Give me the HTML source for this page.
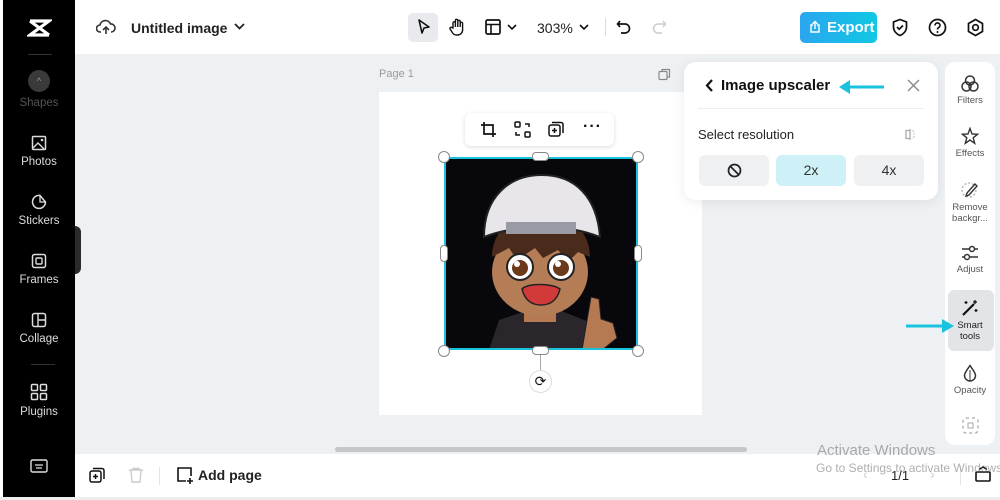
<!DOCTYPE html>
<html><head><style>
*{margin:0;padding:0;box-sizing:border-box}
body{width:1000px;height:500px;background:#fff;font-family:"Liberation Sans",sans-serif;position:relative;overflow:hidden;color:#111}
.abs{position:absolute}
.side{left:3px;top:0;width:72px;height:497px;background:#000;color:#ddd;font-size:11.5px;text-align:center}
.si{position:absolute;left:0;width:72px}
.si svg{display:block;margin:0 auto 5px}
.rp{left:945px;top:62px;width:50px;height:383px;background:#fff;border-radius:10px;font-size:9.5px;color:#555;text-align:center}
.ri{position:absolute;left:0;width:50px}
.ri svg{display:block;margin:0 auto 3px}
.btn{position:absolute;top:155px;width:70px;height:31px;background:#eef0f2;border-radius:6px;font-size:14px;text-align:center;line-height:31px;color:#333}
</style></head><body>
<div class="abs" style="left:75px;top:54px;width:925px;height:400px;background:#eef1f4"></div>
<div class="abs" style="left:0;top:497px;width:1000px;height:3px;background:#eee"></div>
<div class="abs side">
 <svg class="abs" style="left:24px;top:18px" width="25" height="20" viewBox="0 0 25 20"><path d="M3 3h19L3 17h19M3 3l19 14" stroke="#fff" stroke-width="3.2" fill="none"/></svg>
 <div class="abs" style="left:25px;top:54px;width:24px;height:1px;background:#333"></div>
 <div class="abs" style="left:25px;top:70px;width:22px;height:22px;border-radius:50%;background:#3a3a3a;color:#999;font-size:9px;line-height:22px">^</div>
 <div class="si" style="top:97px;color:#555">Shapes</div>
 <div class="si" style="top:135px"><svg width="16" height="16"><rect x="1.5" y="1.5" width="13" height="13" rx="1" stroke="#ddd" fill="none" stroke-width="1.5"/><path d="M2 13l5-5 6 6" stroke="#ddd" fill="none" stroke-width="1.4"/><circle cx="11" cy="5" r="1.3" fill="#ddd"/></svg>Photos</div>
 <div class="si" style="top:194px"><svg width="16" height="16"><path d="M9 1.5A6.5 6.5 0 1 0 14.5 8L9 1.5z" stroke="#ddd" fill="none" stroke-width="1.5"/><path d="M9 1.5v6.5h5.5" stroke="#ddd" fill="none" stroke-width="1.3"/></svg>Stickers</div>
 <div class="si" style="top:253px"><svg width="16" height="16"><rect x="1.5" y="1.5" width="13" height="13" rx="2" stroke="#ddd" fill="none" stroke-width="1.5"/><rect x="5" y="5" width="6" height="6" rx="1" stroke="#ddd" fill="none" stroke-width="1.4"/></svg>Frames</div>
 <div class="si" style="top:312px"><svg width="16" height="16"><rect x="1.5" y="1.5" width="13" height="13" rx="2" stroke="#ddd" fill="none" stroke-width="1.5"/><path d="M7 2v12M7 8h7" stroke="#ddd" stroke-width="1.4"/></svg>Collage</div>
 <div class="abs" style="left:28px;top:364px;width:24px;height:1px;background:#333"></div>
 <div class="si" style="top:383px"><svg width="18" height="18"><g stroke="#ddd" fill="none" stroke-width="1.5"><rect x="1.5" y="1.5" width="6" height="6" rx="1"/><rect x="10.5" y="1.5" width="6" height="6" rx="1"/><rect x="1.5" y="10.5" width="6" height="6" rx="1"/><rect x="10.5" y="10.5" width="6" height="6" rx="1"/></g></svg>Plugins</div>
 <svg class="abs" style="left:27px;top:459px" width="18" height="15"><rect x="1" y="1" width="16" height="12" rx="1.5" stroke="#ddd" fill="none" stroke-width="1.4"/><path d="M5 6h8M6 9h6" stroke="#ddd" stroke-width="1.3"/></svg>
</div>
<div class="abs" style="left:75px;top:226px;width:6px;height:48px;background:#2a2a2a;border-radius:0 6px 6px 0"></div>
<svg class="abs" style="left:96px;top:18px" width="20" height="18"><path d="M5 14H4a3.5 3.5 0 0 1 0-7 5.5 5.5 0 0 1 10.5-1 4 4 0 0 1 1 8H15M10 16V9M7 12l3-3 3 3" stroke="#333" stroke-width="1.6" fill="none"/></svg>
<div class="abs" style="left:131px;top:20px;font-size:14px;font-weight:bold;color:#222">Untitled image</div>
<svg class="abs" style="left:234px;top:23px" width="11" height="8"><path d="M1 1l4.5 4.5L10 1" stroke="#222" stroke-width="1.8" fill="none"/></svg>
<div class="abs" style="left:408px;top:13px;width:30px;height:29px;background:#e8eaed;border-radius:5px"></div>
<svg class="abs" style="left:416px;top:18px" width="16" height="18"><path d="M3 2l10 7-5 1-2 5z" stroke="#111" stroke-width="1.6" fill="none" stroke-linejoin="round"/></svg>
<svg class="abs" style="left:448px;top:17px" width="18" height="20"><path d="M5 11V6a1.2 1.2 0 0 1 2.4 0v4V3.5a1.2 1.2 0 0 1 2.4 0V10V4.5a1.2 1.2 0 0 1 2.4 0V10V6.5a1.2 1.2 0 0 1 2.4 0V13a5 5 0 0 1-5 5h-1a5 5 0 0 1-4-2l-2.5-4a1.2 1.2 0 0 1 2-1.3z" stroke="#111" stroke-width="1.4" fill="none"/></svg>
<svg class="abs" style="left:485px;top:19px" width="16" height="16"><rect x="1" y="1" width="14" height="14" rx="1.5" stroke="#111" stroke-width="1.7" fill="none"/><path d="M1 5.5h14M6 5.5V15" stroke="#111" stroke-width="1.6"/></svg>
<svg class="abs" style="left:507px;top:24px" width="10" height="7"><path d="M1 1l4 4 4-4" stroke="#111" stroke-width="1.6" fill="none"/></svg>
<div class="abs" style="left:537px;top:20px;font-size:14px;color:#222">303%</div>
<svg class="abs" style="left:579px;top:24px" width="10" height="7"><path d="M1 1l4 4 4-4" stroke="#111" stroke-width="1.6" fill="none"/></svg>
<div class="abs" style="left:605px;top:18px;width:1px;height:18px;background:#ddd"></div>
<svg class="abs" style="left:616px;top:19px" width="16" height="16"><path d="M4 2L1.5 5 4 8M2 5h7a4.5 4.5 0 0 1 0 9H5" stroke="#111" stroke-width="1.7" fill="none"/></svg>
<svg class="abs" style="left:651px;top:19px" width="16" height="16"><path d="M12 2l2.5 3L12 8M14 5H7a4.5 4.5 0 0 0 0 9h4" stroke="#ccc" stroke-width="1.5" fill="none"/></svg>
<div class="abs" style="left:800px;top:12px;width:77px;height:31px;border-radius:5px;background:linear-gradient(90deg,#2aa6ef,#10c8e4);color:#fff;font-weight:bold;font-size:15px;line-height:31px;padding-left:27px">Export</div>
<svg class="abs" style="left:808px;top:20px" width="14" height="14"><path d="M5 5H3v7h8V5H9M7 9V1.5M4.5 4L7 1.5 9.5 4" stroke="#fff" stroke-width="1.4" fill="none"/></svg>
<svg class="abs" style="left:891px;top:18px" width="18" height="19"><path d="M9 1.5l6.5 2.5v5c0 4-3 7-6.5 8.5C5.5 16 2.5 13 2.5 9V4z" stroke="#111" stroke-width="1.7" fill="none"/><path d="M6 9l2.2 2.2L12 7.5" stroke="#111" stroke-width="1.7" fill="none"/></svg>
<svg class="abs" style="left:928px;top:18px" width="19" height="19"><circle cx="9.5" cy="9.5" r="8" stroke="#111" stroke-width="1.7" fill="none"/><path d="M7 7.5a2.5 2.5 0 1 1 3.5 2.2c-.8.4-1 1-1 1.8" stroke="#111" stroke-width="1.6" fill="none"/><circle cx="9.5" cy="14" r="1" fill="#111"/></svg>
<svg class="abs" style="left:966px;top:18px" width="19" height="19"><path d="M9.5 1.5l7 4v8l-7 4-7-4v-8z" stroke="#111" stroke-width="1.7" fill="none"/><circle cx="9.5" cy="9.5" r="2.8" stroke="#111" stroke-width="1.7" fill="none"/></svg>
<div class="abs" style="left:379px;top:68px;font-size:11px;color:#999">Page 1</div>
<svg class="abs" style="left:658px;top:68px" width="13" height="13"><rect x="1" y="3.5" width="8" height="8" rx="1" stroke="#888" fill="none" stroke-width="1.2"/><path d="M4 3.5V1.5h7.5V9H9.5" stroke="#888" fill="none" stroke-width="1.2"/></svg>
<div class="abs" style="left:379px;top:92px;width:323px;height:323px;background:#fff"></div>
<div class="abs" style="left:465px;top:113px;width:149px;height:33px;background:#fff;border-radius:6px;box-shadow:0 1px 4px rgba(0,0,0,.15)"></div>
<svg class="abs" style="left:480px;top:121px" width="17" height="17"><path d="M4 1v12h12M1 4h12v12" stroke="#111" stroke-width="1.7" fill="none"/></svg>
<svg class="abs" style="left:514px;top:121px" width="17" height="17"><g stroke="#111" stroke-width="1.5" fill="none"><rect x="1" y="1" width="5" height="5" rx="1"/><rect x="11" y="11" width="5" height="5" rx="1"/><path d="M11 3h4v3M6 14H2v-3"/></g></svg>
<svg class="abs" style="left:548px;top:121px" width="17" height="17"><g stroke="#111" stroke-width="1.5" fill="none"><rect x="1" y="4" width="11" height="11" rx="2"/><path d="M4 1.5h9a2 2 0 0 1 2 2V12M6.5 7v5M4 9.5h5"/></g></svg>
<div class="abs" style="left:583px;top:118px;font-size:16px;font-weight:bold;letter-spacing:1px">···</div>
<svg class="abs" style="left:444px;top:157px" width="194" height="193" viewBox="0 0 194 193">
<rect width="194" height="193" fill="#07070c"/>
<path d="M45 193l10-30 30-10h30l30 12 10 28z" fill="#2a262c"/>
<rect x="80" y="140" width="32" height="25" fill="#b57a52"/>
<ellipse cx="96" cy="115" rx="48" ry="44" fill="#b47d56"/>
<path d="M48 100c0-25 20-45 48-45s50 18 50 45l-12-5-10 10-10-12-15 8-8-10-18 12-8-12z" fill="#4a2a1a"/>
<path d="M40 80c0-40 25-62 58-62s55 22 58 62c-20-8-40-10-58-10s-40 3-58 10z" fill="#e8e6ea" stroke="#222" stroke-width="2"/>
<rect x="62" y="65" width="70" height="12" fill="#9a9aa4"/>
<circle cx="76" cy="110" r="13" fill="#fff" stroke="#222" stroke-width="2"/><circle cx="76" cy="111" r="8" fill="#6a3a1a"/><circle cx="73" cy="107" r="3" fill="#fff"/>
<circle cx="117" cy="110" r="13" fill="#fff" stroke="#222" stroke-width="2"/><circle cx="117" cy="111" r="8" fill="#6a3a1a"/><circle cx="114" cy="107" r="3" fill="#fff"/>
<path d="M78 132c5-6 30-6 38 0-3 12-10 16-19 16s-16-4-19-16z" fill="#d23a3a" stroke="#222" stroke-width="1.5"/>
<path d="M147 140l8 2 2 20 12 4 4 15-15 12h-20z" fill="#b57a52" stroke="#222" stroke-width="1"/>
</svg>
<div class="abs" style="left:444px;top:157px;width:194px;height:193px;border:2px solid #19c3dd"></div>
<div class="abs" style="left:540px;top:350px;width:1px;height:20px;background:#aaa"></div>
<div class="abs" style="left:438px;top:151px;width:12px;height:12px;border-radius:50%;background:#fff;border:1px solid #888"></div>
<div class="abs" style="left:632px;top:151px;width:12px;height:12px;border-radius:50%;background:#fff;border:1px solid #888"></div>
<div class="abs" style="left:438px;top:345px;width:12px;height:12px;border-radius:50%;background:#fff;border:1px solid #888"></div>
<div class="abs" style="left:632px;top:345px;width:12px;height:12px;border-radius:50%;background:#fff;border:1px solid #888"></div>
<div class="abs" style="left:532px;top:152px;width:17px;height:9px;border-radius:4px;background:#fff;border:1px solid #888"></div>
<div class="abs" style="left:532px;top:346px;width:17px;height:9px;border-radius:4px;background:#fff;border:1px solid #888"></div>
<div class="abs" style="left:440px;top:245px;width:8px;height:17px;border-radius:4px;background:#fff;border:1px solid #888"></div>
<div class="abs" style="left:634px;top:245px;width:8px;height:17px;border-radius:4px;background:#fff;border:1px solid #888"></div>
<div class="abs" style="left:529px;top:370px;width:23px;height:23px;border-radius:50%;background:#fff;border:1px solid #ddd;font-size:14px;text-align:center;line-height:21px">⟳</div>
<div class="abs" style="left:684px;top:62px;width:254px;height:138px;background:#fff;border-radius:12px;box-shadow:0 2px 12px rgba(0,0,0,.08)"></div>
<svg class="abs" style="left:704px;top:78px" width="10" height="15"><path d="M8 2L3 7.5 8 13" stroke="#111" stroke-width="2.2" fill="none"/></svg>
<div class="abs" style="left:721px;top:77px;font-size:15px;font-weight:bold;color:#111">Image upscaler</div>
<svg class="abs" style="left:838px;top:79px" width="47" height="16"><path d="M10 8h36" stroke="#19c3dd" stroke-width="3"/><path d="M1 8l11-7v14z" fill="#19c3dd"/></svg>
<svg class="abs" style="left:907px;top:79px" width="13" height="13"><path d="M1 1l11 11M12 1L1 12" stroke="#888" stroke-width="1.4"/></svg>
<div class="abs" style="left:698px;top:108px;width:225px;height:1px;background:#eee"></div>
<div class="abs" style="left:698px;top:127px;font-size:13px;color:#222">Select resolution</div>
<svg class="abs" style="left:904px;top:128px" width="12" height="13"><path d="M6 1v11M6 2.5H2v8h4" stroke="#aaa" stroke-width="1.3" fill="none"/><path d="M8 3h2v7H8" stroke="#ccc" stroke-width="1.2" fill="none" stroke-dasharray="2 1.5"/></svg>
<div class="btn" style="left:699px"><svg style="margin-top:8px" width="15" height="15"><circle cx="7.5" cy="7.5" r="6" stroke="#222" stroke-width="1.7" fill="none"/><path d="M3.5 3.5l8 8" stroke="#222" stroke-width="1.7"/></svg></div>
<div class="btn" style="left:776px;background:#cdf1f7">2x</div>
<div class="btn" style="left:854px">4x</div>
<div class="abs rp">
 <div class="ri" style="top:13px"><svg width="18" height="17"><g stroke="#333" stroke-width="1.5" fill="none"><circle cx="9" cy="5.5" r="4.5"/><circle cx="5.5" cy="11.5" r="4.5"/><circle cx="12.5" cy="11.5" r="4.5"/></g></svg>Filters</div>
 <div class="ri" style="top:65px"><svg width="18" height="18"><path d="M9 1.5l2 5.5 5.5.3-4.3 3.5 1.5 5.5L9 13l-4.7 3.3 1.5-5.5L1.5 7.3 7 7z" stroke="#333" stroke-width="1.4" fill="none"/></svg>Effects</div>
 <div class="ri" style="top:119px"><svg width="18" height="18"><circle cx="8" cy="9" r="7" stroke="#aaa" stroke-width="1.3" fill="none" stroke-dasharray="2 2"/><path d="M14 3l-8 9-1 3 3-1 8-9z" stroke="#333" stroke-width="1.4" fill="#fff"/></svg>Remove<br>backgr...</div>
 <div class="ri" style="top:183px"><svg width="18" height="16"><g stroke="#333" stroke-width="1.5" fill="none"><path d="M1 4h16M1 12h16"/><circle cx="11" cy="4" r="2.5" fill="#fff"/><circle cx="6" cy="12" r="2.5" fill="#fff"/></g></svg>Adjust</div>
 <div class="abs" style="left:3px;top:228px;width:46px;height:61px;background:#e2e4e7;border-radius:6px"></div>
 <div class="ri" style="top:237px;color:#222"><svg width="18" height="18"><path d="M2 16L13 5" stroke="#111" stroke-width="2.2"/><path d="M14 1v4M12 3h4M5 2v3M3.5 3.5h3M15 10v3M13.5 11.5h3" stroke="#111" stroke-width="1.3"/></svg>Smart<br>tools</div>
 <div class="ri" style="top:302px"><svg width="16" height="18"><path d="M8 1.5C5 6 2.5 8.5 2.5 11.5a5.5 5.5 0 0 0 11 0C13.5 8.5 11 6 8 1.5z" stroke="#333" stroke-width="1.5" fill="none"/><path d="M8 6v11" stroke="#333" stroke-width="1"/></svg>Opacity</div>
 <svg class="abs" style="left:17px;top:355px" width="17" height="17"><rect x="1" y="1" width="15" height="15" rx="3" stroke="#aaa" stroke-width="1.3" fill="none" stroke-dasharray="3 3"/><rect x="6" y="6" width="5" height="5" stroke="#aaa" fill="none"/></svg>
</div>
<svg class="abs" style="left:905px;top:319px" width="50" height="14"><path d="M1 7h38" stroke="#19c3dd" stroke-width="3"/><path d="M49 7L37 0v14z" fill="#19c3dd"/></svg>
<div class="abs" style="left:335px;top:447px;width:412px;height:5px;border-radius:3px;background:#c4c6c9"></div>
<svg class="abs" style="left:89px;top:467px" width="17" height="17"><g stroke="#111" stroke-width="1.5" fill="none"><rect x="1" y="4" width="11" height="11" rx="2"/><path d="M4 1.5h9a2 2 0 0 1 2 2V12M6.5 7v5M4 9.5h5"/></g></svg>
<svg class="abs" style="left:128px;top:467px" width="16" height="17"><path d="M1 3h14M5 3V1.5h6V3M3 3l1 12h8l1-12" stroke="#ccc" stroke-width="1.4" fill="none"/></svg>
<div class="abs" style="left:159px;top:467px;width:1px;height:18px;background:#e5e5e5"></div>
<svg class="abs" style="left:176px;top:466px" width="18" height="18"><path d="M10 15H2V2h13v8M14 12v6M11 15h6" stroke="#111" stroke-width="1.6" fill="none"/></svg>
<div class="abs" style="left:198px;top:467px;font-size:14px;font-weight:bold;color:#222">Add page</div>
<div class="abs" style="left:863px;top:466px;font-size:14px;color:#ccc">‹</div>
<div class="abs" style="left:891px;top:468px;font-size:13px;color:#222">1/1</div>
<div class="abs" style="left:930px;top:466px;font-size:14px;color:#ccc">›</div>
<div class="abs" style="left:960px;top:465px;width:1px;height:20px;background:#e5e5e5"></div>
<svg class="abs" style="left:975px;top:466px" width="16" height="16"><rect x="1" y="6" width="14" height="9" rx="1" stroke="#111" stroke-width="1.6" fill="none"/><path d="M4 3.5L8 1l4 2.5" stroke="#111" stroke-width="1.4" fill="none"/></svg>
<div class="abs" style="left:817px;top:442px;font-size:15px;color:rgba(120,120,120,.6);white-space:nowrap">Activate Windows</div>
<div class="abs" style="left:816px;top:461px;font-size:12px;color:rgba(120,120,120,.6);white-space:nowrap">Go to Settings to activate Windows.</div>
</body></html>
